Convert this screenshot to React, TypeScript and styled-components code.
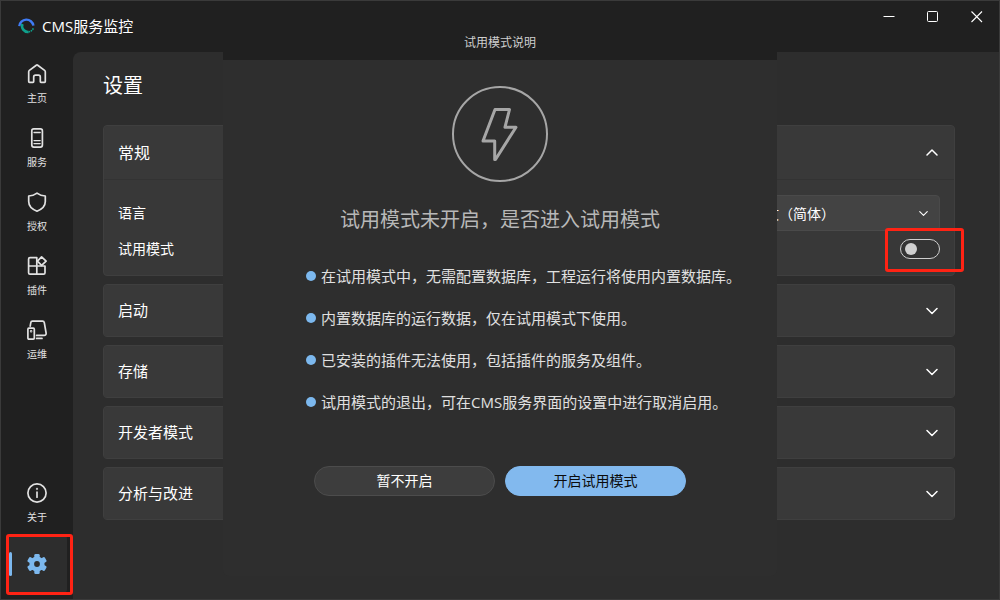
import React, { useState } from "react";
import styled, { createGlobalStyle } from "styled-components";

const GlobalStyle = createGlobalStyle`
  * { box-sizing: border-box; }
  body { margin: 0; background: #202020; }
  body, button, select, input {
    font-family: "Open Sans", "Noto Sans CJK SC", sans-serif;
  }
  button { border: 0; padding: 0; background: none; color: inherit; cursor: pointer; }
  h1, h2, p, ul { margin: 0; padding: 0; font-weight: 400; }
  svg { display: block; flex: none; }
`;

const Window = styled.div`
  position: relative;
  display: flex;
  flex-direction: column;
  min-height: 100vh;
  border: 1px solid #3a3a3a;
  background: #202020;
  color: #fff;
`;

const TitleBar = styled.header`
  display: flex;
  justify-content: space-between;
  height: 51px;
`;

const Brand = styled.div`
  display: flex;
  align-items: center;
  gap: 7px;
  padding: 0 0 2px 17px;
  font-size: 15px;
`;

const WindowControls = styled.div`
  display: flex;
  height: 32px;
`;

const WindowButton = styled.button`
  display: grid;
  place-items: center;
  width: 44px;
`;

const Body = styled.div`
  display: flex;
  flex: 1;
`;

const Sidebar = styled.nav`
  display: flex;
  flex-direction: column;
  justify-content: space-between;
  width: 72px;
  padding-bottom: 6px;
`;

const NavGroup = styled.div`
  display: flex;
  flex-direction: column;
`;

const NavButton = styled.button`
  display: flex;
  flex-direction: column;
  align-items: center;
  justify-content: center;
  gap: 7px;
  height: 64px;
  color: #e2e2e2;
  font-size: 10px;
  line-height: 14px;
`;

const ActiveNav = styled.button`
  position: relative;
  display: grid;
  place-items: center;
  width: 60px;
  height: 58px;
  margin: 0 6px;
  border-radius: 4px;
  background: #2d2d2d;
  color: #7cb8ee;

  &::before {
    content: "";
    position: absolute;
    left: 2px;
    top: 17px;
    width: 3px;
    height: 24px;
    border-radius: 2px;
    background: #7cb8ee;
  }
`;

const Highlight = styled.span<{ $inset: string }>`
  position: absolute;
  inset: ${(p) => p.$inset};
  border: 3px solid #ff2314;
  border-radius: 3px;
  pointer-events: none;
`;

const Content = styled.main`
  flex: 1;
  padding: 18px 44px 40px 30px;
  border-radius: 8px 0 0 0;
  background: #2d2d2d;
`;

const PageTitle = styled.h1`
  font-size: 20px;
  line-height: 32px;
`;

const Sections = styled.div`
  display: flex;
  flex-direction: column;
  gap: 8px;
  margin-top: 23px;
`;

const Card = styled.section`
  border: 1px solid #3f3f3f;
  border-radius: 4px;
  background: #383838;
`;

const CardHeader = styled.button<{ $open?: boolean }>`
  display: flex;
  align-items: center;
  justify-content: space-between;
  width: 100%;
  height: ${(p) => (p.$open ? 54 : 51)}px;
  padding: 0 16px 0 14px;
  border-bottom: ${(p) => (p.$open ? "1px solid #333" : "0")};
  border-radius: 4px 4px 0 0;
  background: #393939;
  font-size: ${(p) => (p.$open ? 16 : 15)}px;
`;

const CardTitle = styled.span`
  padding-bottom: 2px;
`;

const CardBody = styled.div`
  padding: 15px 14px 8px;
`;

const Field = styled.div`
  display: flex;
  align-items: center;
  justify-content: space-between;
  height: 36px;
  font-size: 14px;
`;

const FieldLabel = styled.label`
  padding-bottom: 2px;
`;

const SelectWrap = styled.div`
  display: grid;
  align-items: center;
  width: 200px;
  height: 36px;

  & > * { grid-area: 1 / 1; }
  & > svg { justify-self: end; margin-right: 12px; pointer-events: none; }
`;

const Select = styled.select`
  appearance: none;
  width: 100%;
  height: 36px;
  padding: 0 10px;
  border: 1px solid #4a4a4a;
  border-radius: 4px;
  background: #434343;
  color: #fff;
  font-size: 14px;
`;

const SwitchWrap = styled.div`
  position: relative;
  display: flex;
`;

const Switch = styled.input`
  appearance: none;
  display: flex;
  align-items: center;
  width: 40px;
  height: 20px;
  margin: 0;
  padding: 0 4px;
  border: 1px solid #cfcfcf;
  border-radius: 10px;
  background: #343434;

  &::before {
    content: "";
    width: 12px;
    height: 12px;
    border-radius: 50%;
    background: #d0d0d0;
  }
  &:checked { justify-content: flex-end; background: #7cb8ee; }
`;

const Overlay = styled.div`
  position: absolute;
  inset: 0;
  display: flex;
  align-items: center;
  justify-content: center;
  pointer-events: none;
`;

const Dialog = styled.div`
  width: 554px;
  max-width: 100%;
  border-radius: 0 0 6px 6px;
  background: #2e2e2e;
  overflow: hidden;
  pointer-events: auto;
`;

const DialogBar = styled.div`
  display: flex;
  align-items: center;
  justify-content: center;
  height: 35px;
  background: #202020;
  color: #cfcfcf;
  font-size: 12px;
`;

const DialogBody = styled.div`
  display: flex;
  flex-direction: column;
  align-items: center;
  padding: 26px 32px 80px;
`;

const Question = styled.h2`
  margin-top: 22px;
  color: #b8b8b8;
  font-size: 20px;
  line-height: 32px;
`;

const Notes = styled.ul`
  align-self: stretch;
  margin-top: 19px;
  padding-left: 51px;
  list-style: none;
`;

const Note = styled.li`
  display: flex;
  align-items: center;
  gap: 5px;
  height: 42px;
  color: #e0e0e0;
  font-size: 15px;
  white-space: nowrap;

  &::before {
    content: "";
    width: 10px;
    height: 10px;
    border-radius: 50%;
    background: #7cb8ee;
  }
`;

const Actions = styled.div`
  display: flex;
  gap: 10px;
  margin-top: 43px;
`;

const ActionButton = styled.button<{ $primary?: boolean }>`
  width: 181px;
  height: 30px;
  padding-bottom: 2px;
  border: 1px solid ${(p) => (p.$primary ? "#82b9ee" : "#4c4c4c")};
  border-radius: 15px;
  background: ${(p) => (p.$primary ? "#82b9ee" : "#3d3d3d")};
  color: ${(p) => (p.$primary ? "#0b0b0b" : "#fff")};
  font-size: 14px;
`;

const Stroke = ({ children }: { children: React.ReactNode }) => (
  <svg width="20" height="20" viewBox="0 0 20 20" fill="none" stroke="currentColor" strokeWidth="1.7" strokeLinecap="round" strokeLinejoin="round">
    {children}
  </svg>
);

const Logo = () => (
  <svg width="17" height="17" viewBox="0 0 17 17" fill="none">
    <path d="M1.3 9.2 A7.1 7.1 0 0 1 15.4 8.6" stroke="#3f7bf5" strokeWidth="2.4" />
    <path d="M4.4 7 A5.9 5.9 0 0 0 10.5 14.9" stroke="#0fa08c" strokeWidth="2.6" />
    <path d="M10.5 14.9 A6 6 0 0 0 15.5 11" stroke="#0fa08c" strokeWidth="1.6" strokeDasharray="1.6 .7" />
  </svg>
);

const Chevron = ({ up, size = 12 }: { up?: boolean; size?: number }) => (
  <svg width={size} height={size} viewBox="0 0 12 12" fill="none" stroke="#fff" strokeWidth="1.5" strokeLinecap="round" strokeLinejoin="round">
    <path d={up ? "M1 8 6 3 11 8" : "M1 3.5 6 8.5 11 3.5"} />
  </svg>
);

const GearIcon = () => (
  <svg width="20" height="20" viewBox="0 0 20 20" fill="currentColor">
    <defs>
      <mask id="gear-hole">
        <rect width="20" height="20" fill="#fff" />
        <circle cx="10" cy="10" r="2.9" fill="#000" />
      </mask>
    </defs>
    <g mask="url(#gear-hole)">
      <circle cx="10" cy="10" r="7.6" />
      {[0, 60, 120].map((angle) => (
        <rect key={angle} x="7.3" y="0" width="5.4" height="20" rx="1.3" transform={`rotate(${angle} 10 10)`} />
      ))}
    </g>
  </svg>
);

const navItems = [
  {
    label: "主页",
    icon: <path d="M10.7 1.2 17.6 6.4Q18.3 7 18.3 7.8V17.6Q18.3 18.4 17.5 18.4H14Q13.3 18.4 13.3 17.6V13Q13.3 11.2 11.5 11.2H8.5Q6.7 11.2 6.7 13V17.6Q6.7 18.4 6 18.4H2.5Q1.7 18.4 1.7 17.6V7.8Q1.7 7 2.4 6.4L9.3 1.2Q10 .7 10.7 1.2Z" />,
  },
  {
    label: "服务",
    icon: <><rect x="4.8" y=".9" width="10.6" height="18.2" rx="2" /><path d="M7 4.5h6.2M7 12.6h6.2M7 15.6h6.2" strokeWidth="1.3" /></>,
  },
  {
    label: "授权",
    icon: <path d="M10 1.1C7.6 2.9 4.9 3.8 1.7 4V9.6C1.7 14 4.9 17.3 10 19.2 15.1 17.3 18.3 14 18.3 9.6V4C15.1 3.8 12.4 2.9 10 1.1Z" />,
  },
  {
    label: "插件",
    icon: <><path d="M9.8 10V1.6H3Q1.6 1.6 1.6 3V16.8Q1.6 18.2 3 18.2H16.6Q18 18.2 18 16.8V10H1.6M9.8 10V18.2" /><path d="M14.6 .9 19.1 5.2 14.6 9.4 10.4 5.2Z" /></>,
  },
  {
    label: "运维",
    icon: <><path d="M3.2 6.2 3.8 2.6Q4 1.2 5.4 1.2H15.6Q17 1.2 17.3 2.6L19.1 13Q19.3 15.4 17.2 15.4H9.6M9.6 18.4H15" /><rect x=".9" y="8.2" width="6.4" height="10.9" rx="1" /><circle cx="4.1" cy="11.3" r=".4" /></>,
  },
];

const closedSections = ["启动", "存储", "开发者模式", "分析与改进"];

const notes = [
  "在试用模式中，无需配置数据库，工程运行将使用内置数据库。",
  "内置数据库的运行数据，仅在试用模式下使用。",
  "已安装的插件无法使用，包括插件的服务及组件。",
  "试用模式的退出，可在CMS服务界面的设置中进行取消启用。",
];

export default function App() {
  const [trial, setTrial] = useState(false);

  return (
    <Window>
      <GlobalStyle />
      <TitleBar>
        <Brand>
          <Logo />
          CMS服务监控
        </Brand>
        <WindowControls>
          <WindowButton aria-label="最小化">
            <svg width="12" height="12" viewBox="0 0 12 12" stroke="#fff"><path d="M.5 5.5h11" /></svg>
          </WindowButton>
          <WindowButton aria-label="最大化">
            <svg width="12" height="12" viewBox="0 0 12 12" fill="none" stroke="#fff"><rect x=".5" y=".5" width="10" height="10" rx="1" /></svg>
          </WindowButton>
          <WindowButton aria-label="关闭">
            <svg width="12" height="12" viewBox="0 0 12 12" stroke="#fff" strokeWidth="1.1"><path d="M.5.5l10.5 10.5M11 .5.5 11" /></svg>
          </WindowButton>
        </WindowControls>
      </TitleBar>

      <Body>
        <Sidebar>
          <NavGroup>
            {navItems.map((item) => (
              <NavButton key={item.label}>
                <Stroke>{item.icon}</Stroke>
                {item.label}
              </NavButton>
            ))}
          </NavGroup>
          <NavGroup>
            <NavButton>
              <Stroke>
                <circle cx="10" cy="10" r="9.1" />
                <path d="M10 9v5.2" />
                <circle cx="10" cy="6" r=".3" />
              </Stroke>
              关于
            </NavButton>
            <ActiveNav aria-label="设置" aria-current="page">
              <GearIcon />
              <Highlight $inset="-1px -6px -2px -1px" />
            </ActiveNav>
          </NavGroup>
        </Sidebar>

        <Content>
          <PageTitle>设置</PageTitle>
          <Sections>
            <Card>
              <CardHeader $open aria-expanded="true">
                <CardTitle>常规</CardTitle>
                <Chevron up />
              </CardHeader>
              <CardBody>
                <Field>
                  <FieldLabel htmlFor="language">语言</FieldLabel>
                  <SelectWrap>
                    <Select id="language" defaultValue="zh">
                      <option value="zh">中文（简体）</option>
                    </Select>
                    <Chevron size={9} />
                  </SelectWrap>
                </Field>
                <Field>
                  <FieldLabel htmlFor="trial">试用模式</FieldLabel>
                  <SwitchWrap>
                    <Switch id="trial" type="checkbox" role="switch" checked={trial} onChange={(e) => setTrial(e.target.checked)} />
                    <Highlight $inset="-11px -24px -13px -15px" />
                  </SwitchWrap>
                </Field>
              </CardBody>
            </Card>
            {closedSections.map((title) => (
              <Card key={title}>
                <CardHeader aria-expanded="false">
                  <CardTitle>{title}</CardTitle>
                  <Chevron />
                </CardHeader>
              </Card>
            ))}
          </Sections>
        </Content>
      </Body>

      <Overlay>
        <Dialog role="dialog" aria-labelledby="trial-title">
          <DialogBar id="trial-title">试用模式说明</DialogBar>
          <DialogBody>
            <svg width="96" height="96" viewBox="0 0 96 96" fill="none" stroke="#a6a6a6" strokeLinejoin="round">
              <circle cx="48" cy="48" r="47" strokeWidth="2" />
              <path d="M43 23.5H57.5L53 41.2H64L43.5 73.5H42.7V55H31Z" strokeWidth="3" />
            </svg>
            <Question>试用模式未开启，是否进入试用模式</Question>
            <Notes>
              {notes.map((note) => (
                <Note key={note}>{note}</Note>
              ))}
            </Notes>
            <Actions>
              <ActionButton>暂不开启</ActionButton>
              <ActionButton $primary onClick={() => setTrial(true)}>开启试用模式</ActionButton>
            </Actions>
          </DialogBody>
        </Dialog>
      </Overlay>
    </Window>
  );
}
